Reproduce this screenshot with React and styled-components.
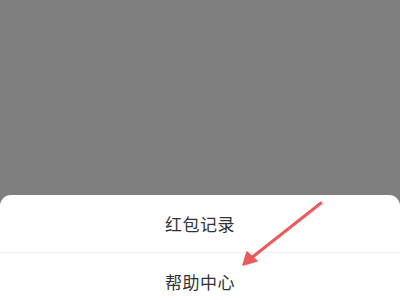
import styled, { createGlobalStyle } from "styled-components";

const Global = createGlobalStyle`
  html, body {
    margin: 0;
    padding: 0;
    background: #7f7f7f;
  }
`;

const Overlay = styled.div`
  position: relative;
  width: 400px;
  height: 300px;
  overflow: hidden;
  background: #7f7f7f;
  padding-top: 195px;
  box-sizing: border-box;
`;

const Sheet = styled.div`
  background: #ffffff;
  border-radius: 11px 11px 0 0;
  display: flex;
  flex-direction: column;
`;

const Item = styled.div`
  height: 57px;
  display: flex;
  align-items: center;
  justify-content: center;
  font-family: "Noto Sans CJK SC", "Noto Sans", sans-serif;
  font-size: 17px;
  color: #333333;
  letter-spacing: 0.5px;
  border-top: ${(p) => (p.$divider ? "1px solid #efefef" : "none")};
`;

const Arrow = styled.svg`
  position: absolute;
  left: 0;
  top: 0;
  pointer-events: none;
`;

export default function App() {
  return (
    <>
      <Global />
      <Overlay>
        <Sheet>
          <Item>红包记录</Item>
          <Item $divider>帮助中心</Item>
        </Sheet>
        <Arrow width="400" height="300" viewBox="0 0 400 300">
          <line x1="321" y1="203" x2="250" y2="259" stroke="#ea5a5e" strokeWidth="3" strokeLinecap="round" />
          <polygon points="243,265 247,252 257,261" fill="#ea5a5e" stroke="#ea5a5e" strokeWidth="1.5" strokeLinejoin="round" />
        </Arrow>
      </Overlay>
    </>
  );
}
